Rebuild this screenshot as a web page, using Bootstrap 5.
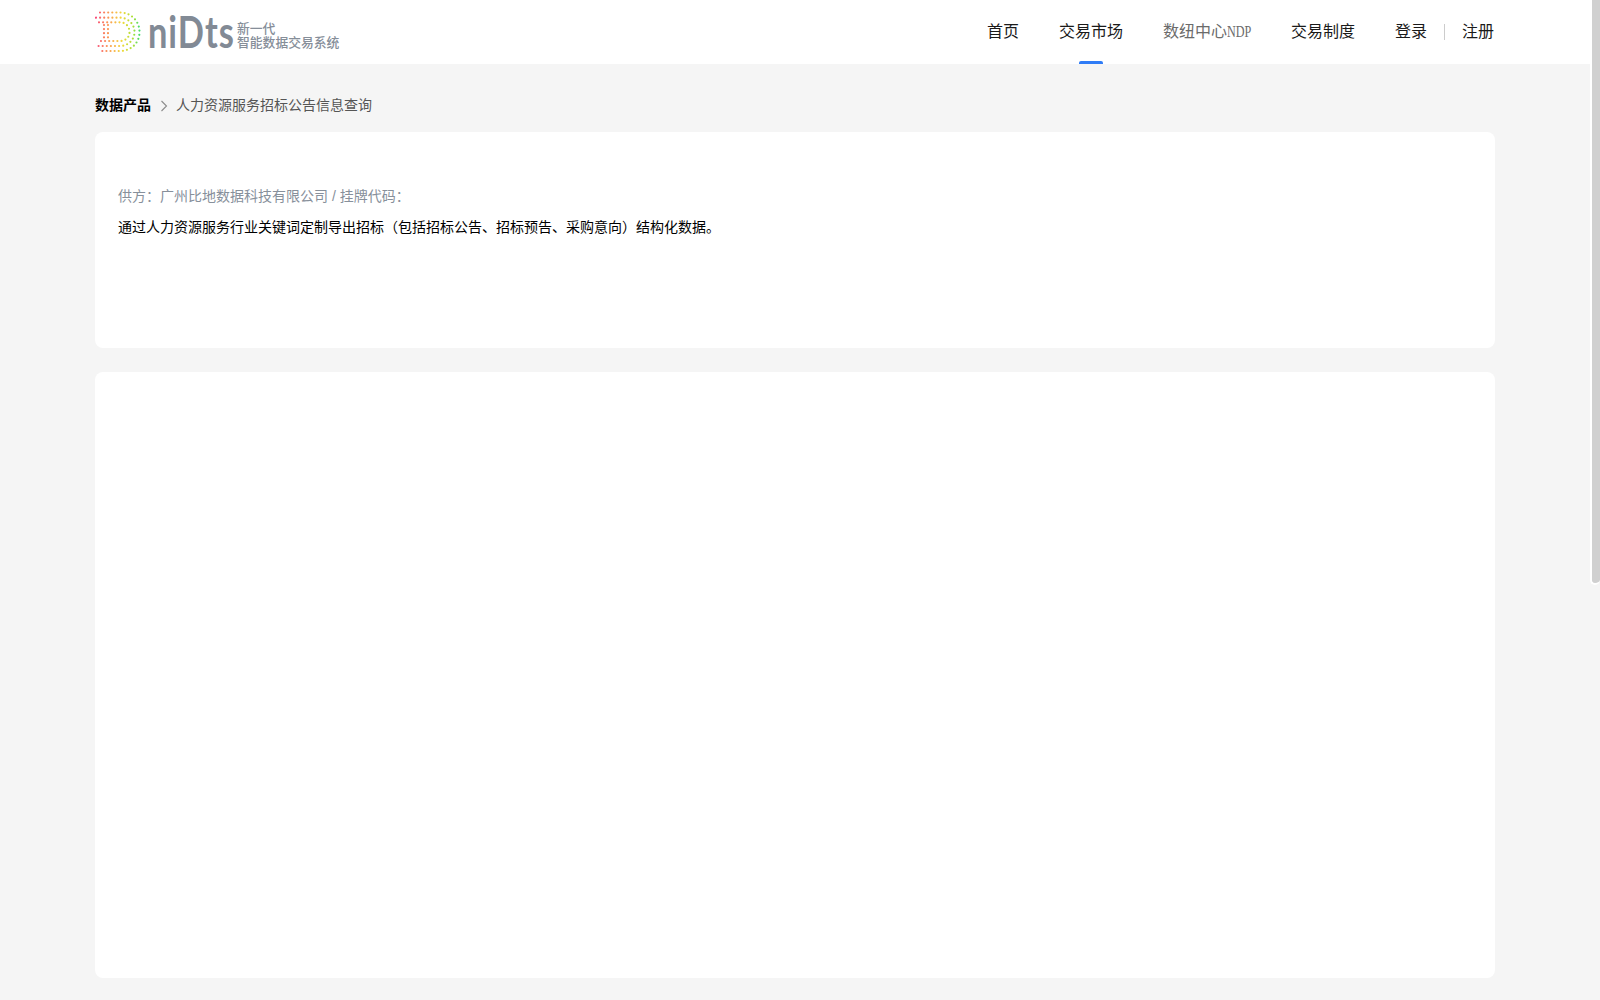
<!DOCTYPE html>
<html lang="zh-CN">
<head>
<meta charset="utf-8">
<title>人力资源服务招标公告信息查询</title>
<link href="https://cdn.jsdelivr.net/npm/bootstrap@5.3.0/dist/css/bootstrap.min.css" rel="stylesheet">
<style>
html,body{height:100%;overflow:hidden}
body{background:#f5f5f5;font-family:"Liberation Sans","Noto Sans CJK SC",sans-serif;font-size:14px;color:#000}
.top-head{height:64px;background:#fff;padding:0 106px 0 95px}
.logo-box{text-decoration:none}
.logo-word{display:block;font-family:Lato,sans-serif;font-weight:700;font-size:43px;line-height:44px;color:#828a95;width:89px;margin-left:7px;letter-spacing:1.200px;transform:scaleX(.8);transform-origin:left center;white-space:nowrap}
.logo-sub{font-size:12.800px;line-height:14px;color:#868e99;font-weight:500;margin-top:8px}
.head-nav{gap:40px;height:64px}
.head-link{font-size:16px;color:#1a1a1a;line-height:64px;position:relative;text-decoration:none}
.head-link.on::after{content:"";position:absolute;left:50%;bottom:0;width:24px;height:3px;margin-left:-12px;background:#2f7cf6;border-radius:2px 2px 0 0}
.head-link.dim{color:#6b6b6b;font-family:"Liberation Serif","Noto Sans CJK SC",serif}
.ndp{display:inline-block;width:24px;transform:scaleX(.76);transform-origin:left center}
.auth-sep{width:1px;height:16px;background:#ccc;margin:0 17px}
.page-body{width:1400px;margin-left:95px}
.crumbs{height:68px;padding-top:15px;font-size:14px;color:#555}
.crumbs b{color:#000}
.crumb-arrow{margin:0 8px 0 9px}
.info-panel{border:0;border-radius:8px;background:#fff;height:216px;padding:48px 24px 0 23px;margin-bottom:24px}
.info-meta{color:#87909b;line-height:32px}
.info-desc{color:#000;line-height:30px}
.main-panel{border:0;border-radius:8px;background:#fff;height:606px}
.scroll-thumb{position:fixed;top:0;right:0;width:10px;height:585px;background:#d0d0d0;border:solid #fff;border-width:0 0 2px 2px;border-radius:0 0 5px 5px}
</style>
</head>
<body>
<header class="top-head d-flex align-items-center justify-content-between">
  <a class="logo-box d-flex align-items-center" href="#">
    <svg width="46" height="42" viewBox="95 11 46 42" fill="none" aria-hidden="true">
      <defs><linearGradient id="lg" gradientUnits="userSpaceOnUse" x1="95" y1="32" x2="140" y2="32">
        <stop offset="0" stop-color="#f8487e"/><stop offset=".3" stop-color="#fb9a52"/><stop offset=".6" stop-color="#f1d93a"/><stop offset=".85" stop-color="#a8e03a"/><stop offset="1" stop-color="#3fdc6e"/></linearGradient></defs>
      <g stroke="url(#lg)" stroke-width="2.200" stroke-linecap="round" stroke-dasharray="0 4.100">
        <path d="M100 12.500H120C131 12.500 139.500 21 139.500 32S131 51 120 51H100"/>
        <path d="M96 17.700H120C128 17.700 134.500 24 134.500 32S128 46 120 46H96"/>
        <path d="M99 22.300H120C125.500 22.300 129.500 26.500 129.500 32S125.500 41 120 41H99"/>
        <path d="M104 25V38"/><path d="M108 25V38"/>
      </g>
    </svg>
    <span class="logo-word">niDts</span>
    <span class="logo-sub">新一代<br>智能数据交易系统</span>
  </a>
  <nav class="head-nav d-flex align-items-center">
    <a class="head-link" href="#">首页</a>
    <a class="head-link on" href="#">交易市场</a>
    <a class="head-link dim" href="#">数纽中心<span class="ndp">NDP</span></a>
    <a class="head-link" href="#">交易制度</a>
    <div class="d-flex align-items-center">
      <a class="head-link" href="#">登录</a><span class="auth-sep"></span><a class="head-link" href="#">注册</a>
    </div>
  </nav>
</header>
<main class="page-body">
  <div class="crumbs d-flex align-items-center">
    <b>数据产品</b>
    <svg class="crumb-arrow" width="8" height="12" viewBox="0 0 8 12" fill="none" aria-hidden="true"><path d="M1.500 1l5 5-5 5" stroke="#8c8c8c" stroke-width="1.100"/></svg>
    <span>人力资源服务招标公告信息查询</span>
  </div>
  <section class="card info-panel">
    <div class="info-meta">供方：广州比地数据科技有限公司 / 挂牌代码：</div>
    <div class="info-desc">通过人力资源服务行业关键词定制导出招标（包括招标公告、招标预告、采购意向）结构化数据。</div>
  </section>
  <section class="card main-panel"></section>
</main>
<div class="scroll-thumb"></div>
<script src="https://cdn.jsdelivr.net/npm/bootstrap@5.3.0/dist/js/bootstrap.bundle.min.js"></script>
</body>
</html>
